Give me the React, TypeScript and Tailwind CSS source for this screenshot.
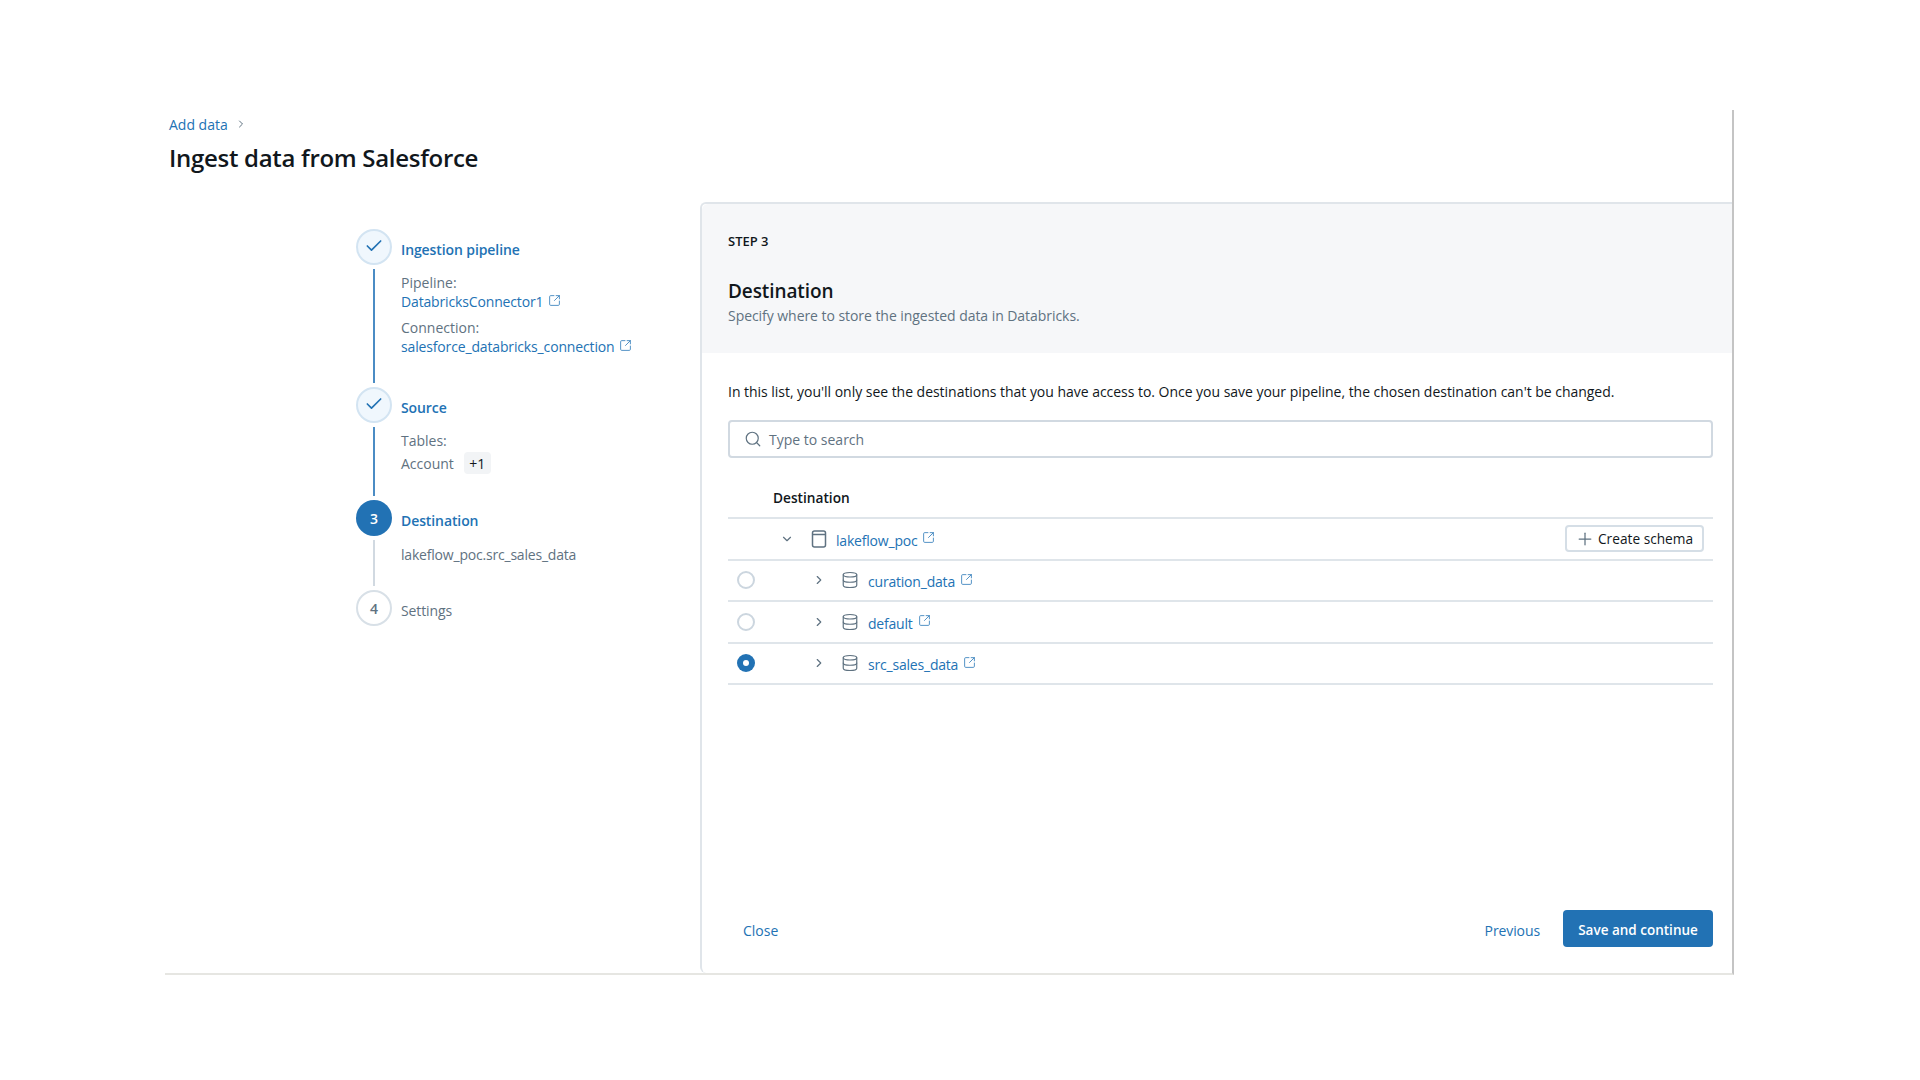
import React from "react";
import { Check, ChevronDown, ChevronRight, Database, Plus, Search, SquareArrowOutUpRight } from "lucide-react";

const Ext = () => <SquareArrowOutUpRight size={13} strokeWidth={1.6} className="text-[#3a82bd] ml-[5px] shrink-0 -mt-[2px]" />;

const Catalog = () => (
  <svg width="16" height="18" viewBox="0 0 16 18" fill="none" stroke="#5f7281" strokeWidth="1.5" className="shrink-0">
    <rect x="1.5" y="1" width="13" height="16" rx="2" />
    <path d="M1.5 4.5h13" />
  </svg>
);

function Row({ name, state }: { name: string; state: "none" | "off" | "on" }) {
  return (
    <div className="h-[41.5px] border-b-2 border-[#dfe5ea] flex items-center">
      <div className="w-[36px] flex justify-center shrink-0">
        {state === "off" && <div className="w-[18px] h-[18px] rounded-full border-2 border-[#ccd6df]" />}
        {state === "on" && (
          <div className="w-[18px] h-[18px] rounded-full bg-[#2272b4] flex items-center justify-center">
            <div className="w-[6px] h-[6px] rounded-full bg-white" />
          </div>
        )}
      </div>
      {state === "none" ? (
        <>
          <ChevronDown size={14} strokeWidth={2} className="ml-[16px] text-[#5f7281] shrink-0" />
          <div className="ml-[17px]"><Catalog /></div>
          <span className="ml-[9px] mt-[3px] text-[#2272b4] tracking-[-0.2px]">{name}</span>
        </>
      ) : (
        <>
          <ChevronRight size={14} strokeWidth={2} className="ml-[48px] text-[#5f7281] shrink-0" />
          <Database size={18} strokeWidth={1.6} className="ml-[15px] text-[#5f7281] shrink-0" />
          <span className="ml-[9px] mt-[3px] text-[#2272b4] tracking-[-0.2px]">{name}</span>
        </>
      )}
      <Ext />
      {state === "none" && (
        <button className="ml-auto mr-[9px] w-[139px] h-[27px] border-2 border-[#d5dee6] rounded-[4px] flex items-center pl-[8px] text-[#11171c] text-[13.7px]">
          <Plus size={20} strokeWidth={1.5} className="text-[#5f7281] shrink-0" />
          <span className="ml-[3px] mt-[2px]">Create schema</span>
        </button>
      )}
    </div>
  );
}

function Circle({ kind, n }: { kind: "done" | "active" | "todo"; n?: number }) {
  if (kind === "done")
    return (
      <div className="w-[36px] h-[36px] rounded-full bg-[#f0f7fd] border-2 border-[#d3e4f2] flex items-center justify-center shrink-0">
        <Check size={20} strokeWidth={2} className="text-[#2272b4] -mt-[2px]" />
      </div>
    );
  if (kind === "active")
    return (
      <div className="w-[36px] h-[36px] rounded-full bg-[#2272b4] text-white font-semibold flex items-center justify-center shrink-0">{n}</div>
    );
  return (
    <div className="w-[36px] h-[36px] rounded-full bg-white border-2 border-[#d8e0e7] text-[#5f7281] font-semibold flex items-center justify-center shrink-0">{n}</div>
  );
}

function Step({ h, circle, line, title, titleClass, children }: { h: string; circle: React.ReactNode; line?: string; title: string; titleClass: string; children?: React.ReactNode }) {
  return (
    <div className={`flex ${h}`}>
      <div className="w-[36px] flex flex-col items-center shrink-0">
        {circle}
        {line && <div className={`w-[2px] flex-1 mt-[4px] mb-[4px] ${line}`} />}
      </div>
      <div className="ml-[9px] pt-[10.5px]">
        <div className={`leading-[20px] tracking-[-0.1px] ${titleClass}`}>{title}</div>
        {children}
      </div>
    </div>
  );
}

export default function App() {
  return (
    <div className="w-[1920px] h-[1080px] bg-white pt-[110px] text-[14px] text-[#11171c]" style={{ fontFamily: '"Open Sans", "Noto Sans", sans-serif' }}>
      <div className="ml-[165px] w-[1569px] h-[865px] border-r-2 border-r-[#c4c4c4] border-b-2 border-b-[#e6e6e2] pl-[4px] flex flex-col">
        <div className="mt-[4px] h-[20px] flex items-center text-[#2272b4]">
          <span>Add data</span>
          <ChevronRight size={12} strokeWidth={2} className="ml-[7px] text-[#5f7281]" />
        </div>
        <h1 className="mt-[6px] text-[24px] leading-[36px] font-semibold tracking-[-0.3px]">Ingest data from Salesforce</h1>
        <div className="mt-[26px] flex flex-1 min-h-0">
          <div className="w-[531px] pl-[187px] pt-[27px] shrink-0">
            <Step h="h-[158px]" circle={<Circle kind="done" />} line="bg-[#4b8cc4]" title="Ingestion pipeline" titleClass="text-[#2272b4] font-semibold">
              <div className="mt-[13.5px] leading-[19px] text-[#5f7281]">Pipeline:</div>
              <div className="leading-[19px] text-[#2272b4] flex items-center tracking-[-0.15px]">DatabricksConnector1<Ext /></div>
              <div className="mt-[7px] leading-[19px] text-[#5f7281]">Connection:</div>
              <div className="leading-[19px] text-[#2272b4] flex items-center tracking-[-0.15px]">salesforce_databricks_connection<Ext /></div>
            </Step>
            <Step h="h-[113px]" circle={<Circle kind="done" />} line="bg-[#4b8cc4]" title="Source" titleClass="text-[#2272b4] font-semibold">
              <div className="mt-[13.5px] leading-[19px] text-[#5f7281]">Tables:</div>
              <div className="mt-[2px] flex items-center text-[#5f7281]">
                <span>Account</span>
                <span className="ml-[10px] w-[27px] h-[22px] rounded-[4px] bg-[#f2f4f6] text-[#11171c] font-medium flex items-center justify-center">+1</span>
              </div>
            </Step>
            <Step h="h-[90px]" circle={<Circle kind="active" n={3} />} line="bg-[#d1d9e1]" title="Destination" titleClass="text-[#2272b4] font-semibold">
              <div className="mt-[14px] leading-[19px] text-[#5f7281] tracking-[-0.2px]">lakeflow_poc.src_sales_data</div>
            </Step>
            <Step h="h-[36px]" circle={<Circle kind="todo" n={4} />} title="Settings" titleClass="text-[#5f7281]" />
          </div>
          <div className="flex-1 min-w-0 border-l-2 border-t-2 border-[#e0e5ea] rounded-tl-[6px] rounded-bl-[6px] flex flex-col">
            <div className="h-[149px] bg-[#f6f7f9] rounded-tl-[6px] pl-[26px] pt-[27px] shrink-0">
              <div className="leading-[20px] text-[13px] font-semibold">STEP 3</div>
              <div className="mt-[26px] leading-[28px] text-[19px] font-semibold tracking-[-0.1px]">Destination</div>
              <div className="mt-[1px] leading-[20px] text-[#5f7281] tracking-[-0.05px]">Specify where to store the ingested data in Databricks.</div>
            </div>
            <div className="pl-[26px] pr-[19px] pt-[29px] flex flex-col flex-1 min-h-0">
              <div className="leading-[20px] tracking-[-0.03px]">In this list, you'll only see the destinations that you have access to. Once you save your pipeline, the chosen destination can't be changed.</div>
              <div className="mt-[18px] h-[38px] border-2 border-[#d1d9e1] rounded-[4px] flex items-center pl-[14px] shrink-0">
                <Search size={18} strokeWidth={1.6} className="text-[#5f7281] shrink-0" />
                <span className="ml-[7px] mt-[1px] text-[#5f7281]">Type to search</span>
              </div>
              <div className="mt-[21px] h-[40px] flex items-center pl-[45px] border-b-2 border-[#dfe5ea] font-semibold text-[13.7px] shrink-0">Destination</div>
              <Row name="lakeflow_poc" state="none" />
              <Row name="curation_data" state="off" />
              <Row name="default" state="off" />
              <Row name="src_sales_data" state="on" />
              <div className="mt-auto pb-[26px] flex items-center">
                <span className="ml-[15px] mt-[3px] text-[#2272b4]">Close</span>
                <span className="ml-auto mt-[3px] text-[#2272b4] tracking-[-0.1px]">Previous</span>
                <button className="ml-[23px] w-[150px] h-[37px] pt-[3px] rounded-[4px] bg-[#2272b4] text-white text-[13.5px] font-semibold flex items-center justify-center">Save and continue</button>
              </div>
            </div>
          </div>
        </div>
      </div>
    </div>
  );
}
